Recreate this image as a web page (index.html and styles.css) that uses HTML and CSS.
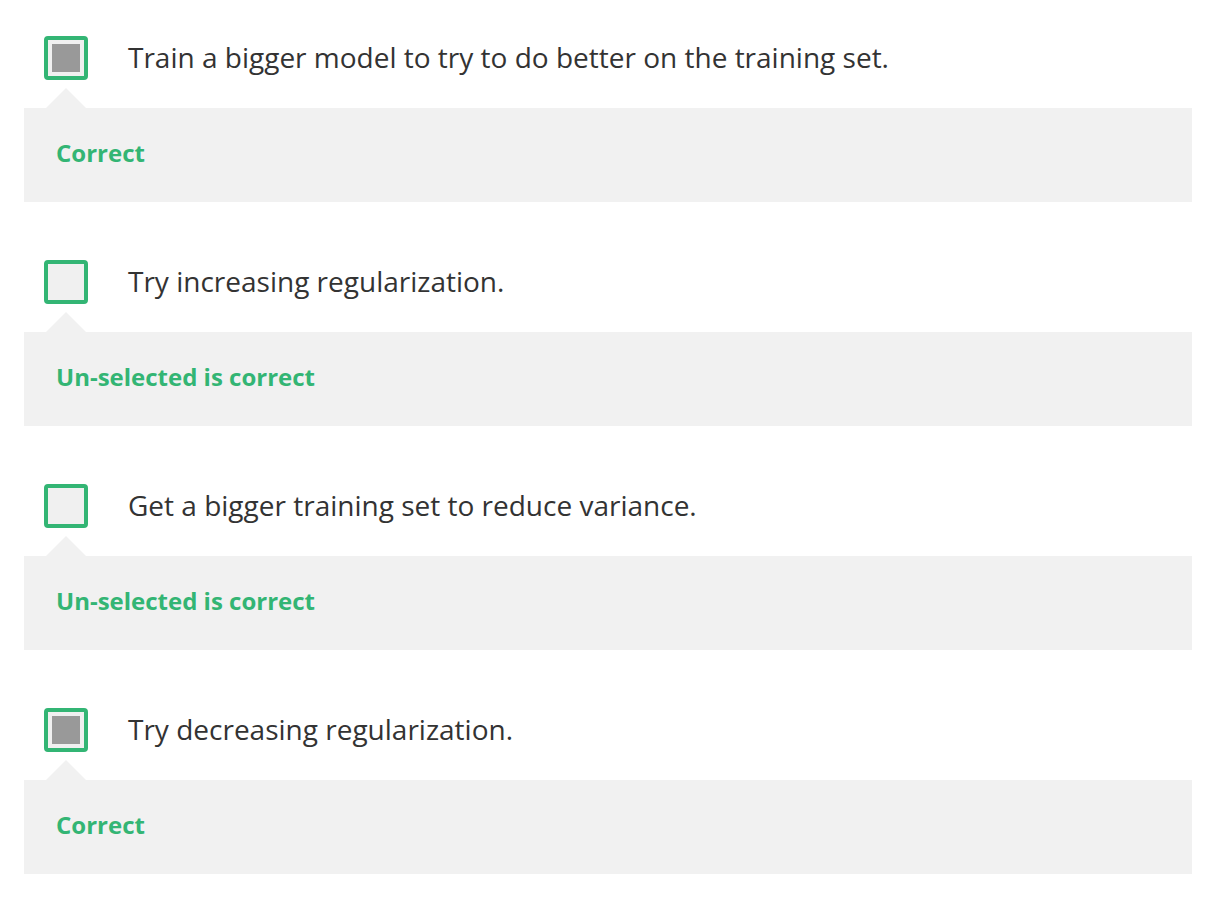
FILE: index.html
```html
<!DOCTYPE html>
<html>
<head>
<meta charset="utf-8">
<link rel="stylesheet" href="styles.css">
</head>
<body>
<div class="list">
  <div class="item">
    <div class="option">
      <span class="box checked"><span class="fill"></span></span>
      <span class="label">Train a bigger model to try to do better on the training set.</span>
    </div>
    <div class="feedback">Correct</div>
  </div>
  <div class="item">
    <div class="option">
      <span class="box"><span class="fill"></span></span>
      <span class="label">Try increasing regularization.</span>
    </div>
    <div class="feedback">Un-selected is correct</div>
  </div>
  <div class="item">
    <div class="option">
      <span class="box"><span class="fill"></span></span>
      <span class="label">Get a bigger training set to reduce variance.</span>
    </div>
    <div class="feedback">Un-selected is correct</div>
  </div>
  <div class="item">
    <div class="option">
      <span class="box checked"><span class="fill"></span></span>
      <span class="label">Try decreasing regularization.</span>
    </div>
    <div class="feedback">Correct</div>
  </div>
</div>
</body>
</html>
```

FILE: styles.css
```css
html, body {
  margin: 0;
  padding: 0;
  background: #ffffff;
}
body {
  font-family: "Open Sans", "Liberation Sans", sans-serif;
  color: #333333;
}
.list {
  width: 1168px;
  padding: 36px 0 0 24px;
  display: flex;
  flex-direction: column;
  gap: 58px;
}
.item {
  display: flex;
  flex-direction: column;
}
.option {
  display: flex;
  align-items: center;
  gap: 40px;
  padding-left: 20px;
  height: 44px;
}
.box {
  box-sizing: border-box;
  width: 44px;
  height: 44px;
  border: 4px solid #33b574;
  border-radius: 4px;
  background: #f0f0f0;
  padding: 4px;
  display: block;
  flex: none;
}
.box .fill {
  display: block;
  width: 28px;
  height: 28px;
}
.box.checked .fill {
  background: #999999;
}
.label {
  font-size: 28px;
  line-height: 42px;
  padding-bottom: 2px;
  color: #333333;
}
.feedback {
  position: relative;
  margin-top: 28px;
  height: 94px;
  box-sizing: border-box;
  background: #f1f1f1;
  padding: 0 0 6px 32px;
  display: flex;
  align-items: center;
  font-size: 24px;
  font-weight: 700;
  color: #33b574;
}
.feedback::before {
  content: "";
  position: absolute;
  left: 22px;
  top: -20px;
  border-left: 20px solid transparent;
  border-right: 20px solid transparent;
  border-bottom: 20px solid #f1f1f1;
}
```
